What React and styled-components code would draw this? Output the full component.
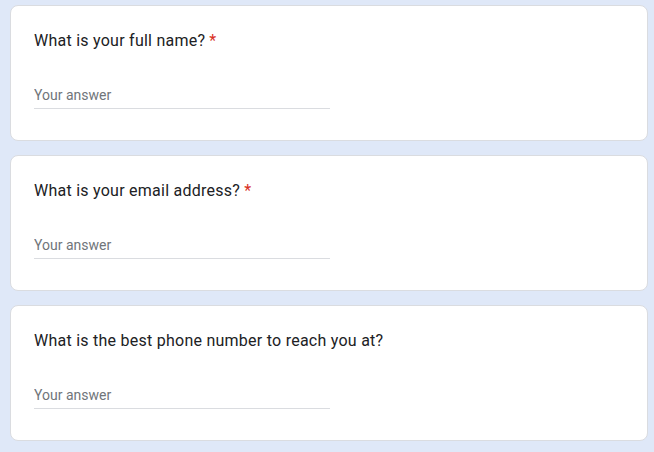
import styled, { createGlobalStyle } from "styled-components";

const Global = createGlobalStyle`
  html, body {
    margin: 0;
    padding: 0;
    background: #dfe8f8;
  }
  * { box-sizing: border-box; }
`;

const Page = styled.div`
  display: flex;
  flex-direction: column;
  gap: 14px;
  padding: 5px 6px 12px 10px;
  font-family: Roboto, "Liberation Sans", sans-serif;
`;

const Card = styled.div`
  background: #fff;
  border: 1px solid #dadce0;
  border-radius: 8px;
  height: 136px;
  padding: 23px 23px 0 23px;
  display: flex;
  flex-direction: column;
`;

const Question = styled.div`
  font-size: 16px;
  line-height: 24px;
  color: #202124;
  letter-spacing: 0.25px;
`;

const Star = styled.span`
  color: #d93025;
  margin-left: 4px;
`;

const Answer = styled.input`
  margin-top: 24px;
  width: 296px;
  border: none;
  border-bottom: 1px solid #dadce0;
  outline: none;
  padding: 8px 0 3px 0;
  font-family: inherit;
  font-size: 14px;
  line-height: 20px;
  color: #202124;
  background: transparent;
  &::placeholder {
    color: #70757a;
  }
`;

const questions = [
  { text: "What is your full name?", required: true },
  { text: "What is your email address?", required: true },
  { text: "What is the best phone number to reach you at?", required: false },
];

export default function App() {
  return (
    <>
      <Global />
      <Page>
        {questions.map((q) => (
          <Card key={q.text}>
            <Question>
              {q.text}
              {q.required && <Star>*</Star>}
            </Question>
            <Answer placeholder="Your answer" />
          </Card>
        ))}
      </Page>
    </>
  );
}
